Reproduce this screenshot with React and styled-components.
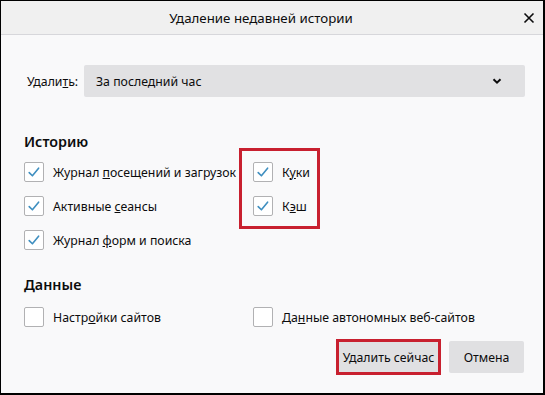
import React from "react";
import styled, { createGlobalStyle } from "styled-components";

const GlobalStyle = createGlobalStyle`
  html, body {
    margin: 0;
    padding: 0;
    background: #ffffff;
  }
  body {
    font-family: "Noto Sans", "Open Sans", "Liberation Sans", sans-serif;
    color: #0c0c0d;
  }
`;

const historyItems = [
  { before: "Журнал ", key: "п", after: "осещений и загрузок", col: 1 },
  { before: "К", key: "у", after: "ки", col: 2 },
  { before: "Активные ", key: "с", after: "еансы", col: 1 },
  { before: "К", key: "э", after: "ш", col: 2 },
  { before: "Журнал ", key: "ф", after: "орм и поиска", col: 1 },
];

const dataItems = [
  { before: "Настр", key: "о", after: "йки сайтов" },
  { before: "Да", key: "н", after: "ные автономных веб-сайтов" },
];

function CheckBox({ checked }) {
  return (
    <Box>
      {checked && (
        <svg width="18" height="18" viewBox="0 0 18 18">
          <path
            d="M4.2 9.6 L7.4 12.8 L13.6 5.2"
            fill="none"
            stroke="#3f8fc0"
            strokeWidth="1.6"
            strokeLinecap="round"
            strokeLinejoin="round"
          />
        </svg>
      )}
    </Box>
  );
}

function Option({ item, checked }) {
  return (
    <OptionRow>
      <CheckBox checked={checked} />
      <span>
        {item.before}
        <u>{item.key}</u>
        {item.after}
      </span>
    </OptionRow>
  );
}

export default function App() {
  return (
    <>
      <GlobalStyle />
      <Dialog>
        <TitleBar>
          <Title>Удаление недавней истории</Title>
          <Close>
            <svg width="12" height="12" viewBox="0 0 12 12">
              <path
                d="M1.5 1.5 L10.5 10.5 M10.5 1.5 L1.5 10.5"
                stroke="#0c0c0d"
                strokeWidth="1.6"
              />
            </svg>
          </Close>
        </TitleBar>
        <Body>
          <SelectRow>
            <SelectLabel>
              Удали<u>т</u>ь:
            </SelectLabel>
            <Select>
              <span>За последний час</span>
              <svg width="12" height="12" viewBox="0 0 12 12">
                <path
                  d="M2.5 4.2 L6 7.7 L9.5 4.2"
                  fill="none"
                  stroke="#0c0c0d"
                  strokeWidth="2"
                />
              </svg>
            </Select>
          </SelectRow>

          <Heading $top={35}>Историю</Heading>
          <Grid>
            {historyItems.map((item, i) => (
              <Option key={i} item={item} checked />
            ))}
            <Marker />
          </Grid>

          <Heading $top={18}>Данные</Heading>
          <Grid $tight>
            {dataItems.map((item, i) => (
              <Option key={i} item={item} />
            ))}
          </Grid>

          <Footer>
            <Button $width={99} $marked>
              Удалить сейчас
            </Button>
            <Button $width={75}>Отмена</Button>
          </Footer>
        </Body>
      </Dialog>
    </>
  );
}

const Dialog = styled.div`
  width: 545px;
  height: 395px;
  box-sizing: border-box;
  border-style: solid;
  border-color: #000;
  border-width: 1px 2px 2px 1px;
  background: #f9f9fa;
  display: flex;
  flex-direction: column;
  overflow: hidden;
`;

const TitleBar = styled.div`
  height: 33px;
  flex: none;
  background: #f0f0f0;
  border-bottom: 1px solid #d7d7db;
  display: flex;
  align-items: center;
  justify-content: center;
  position: relative;
`;

const Title = styled.div`
  font-size: 13.3px;
  margin-right: 22px;
  color: #0c0c0d;
`;

const Close = styled.div`
  position: absolute;
  right: 8px;
  top: 11px;
  width: 12px;
  height: 12px;
  display: flex;
`;

const Body = styled.div`
  padding: 30px 18px 0 22px;
  display: flex;
  flex-direction: column;
  font-size: 12.3px;
`;

const SelectRow = styled.div`
  display: flex;
  align-items: center;
  height: 32px;
`;

const SelectLabel = styled.div`
  width: 61px;
  padding-left: 4px;
  box-sizing: border-box;
`;

const Select = styled.div`
  flex: 1;
  height: 32px;
  background: #e1e1e3;
  border-radius: 2px;
  display: flex;
  align-items: center;
  justify-content: space-between;
  padding: 0 22px 0 12px;
`;

const Heading = styled.div`
  margin-top: ${(p) => p.$top}px;
  height: 20px;
  line-height: 20px;
  font-size: 14.3px;
  font-weight: 600;
  padding-left: 1px;
`;

const Grid = styled.div`
  position: relative;
  display: grid;
  grid-template-columns: 229px 1fr;
  grid-auto-rows: 34px;
  margin-top: ${(p) => (p.$tight ? 5 : 3)}px;
`;

const OptionRow = styled.label`
  display: flex;
  align-items: center;
  gap: 9px;
  padding-left: 1px;
  white-space: nowrap;
`;

const Box = styled.div`
  width: 18px;
  height: 18px;
  flex: none;
  border: 1px solid #b1b1b3;
  border-radius: 2px;
  background: #ffffff;
  display: flex;
  align-items: center;
  justify-content: center;
`;

const Marker = styled.div`
  position: absolute;
  left: 216px;
  top: -7px;
  width: 81px;
  height: 81px;
  box-sizing: border-box;
  border: 3px solid #c8202f;
`;

const Footer = styled.div`
  margin-top: 7px;
  display: flex;
  justify-content: flex-end;
  gap: 11px;
  padding-right: 1px;
`;

const Button = styled.button`
  position: relative;
  width: ${(p) => p.$width}px;
  height: 32px;
  border: none;
  border-radius: 2px;
  background: #e0e0e2;
  font-family: inherit;
  font-size: 12.3px;
  color: #0c0c0d;
  padding: 0;
  ${(p) =>
    p.$marked &&
    `
    &::after {
      content: "";
      position: absolute;
      inset: -2px -3px;
      border: 3px solid #c8202f;
    }
  `}
`;
